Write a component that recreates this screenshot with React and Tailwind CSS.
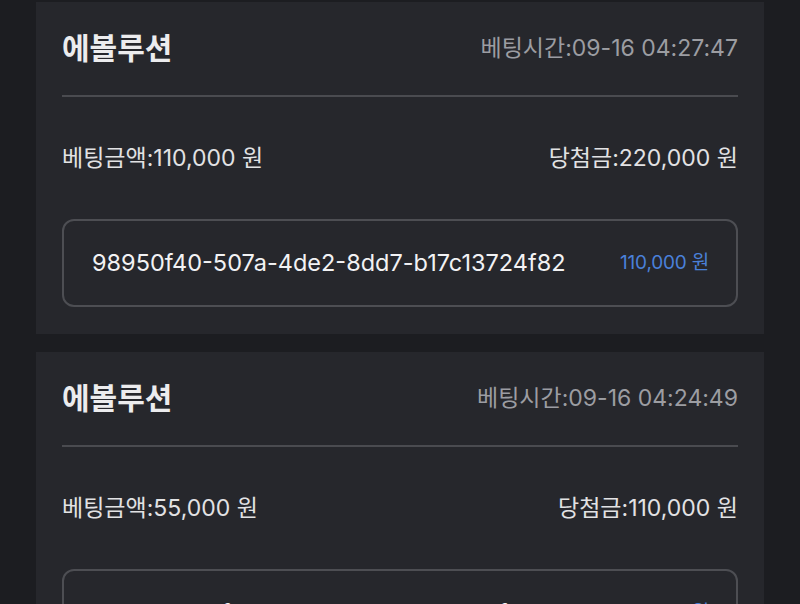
import React from "react";

const items = [
  {
    title: "에볼루션",
    time: "09-16 04:27:47",
    bet: "110,000",
    win: "220,000",
    id: "98950f40-507a-4de2-8dd7-b17c13724f82",
    amt: "110,000",
  },
  {
    title: "에볼루션",
    time: "09-16 04:24:49",
    bet: "55,000",
    win: "110,000",
    id: "3a1c7e52-6f0b-4d1e-9c2a-5e8b7d4f1a03",
    amt: "55,000",
  },
];

function Card({ it }) {
  return (
    <div className="bg-[#26272c] px-[26px] pb-[27px]">
      <div className="h-[93px] flex items-center justify-between">
        <div className="text-[30px] font-bold text-[#ececee]">{it.title}</div>
        <div className="text-[23px] text-[#9c9da2]">베팅시간:{it.time}</div>
      </div>
      <div className="h-[2px] bg-[#4a4b50]" />
      <div className="h-[122px] flex items-center justify-between text-[23px] text-[#e2e2e4]">
        <div>베팅금액:{it.bet} 원</div>
        <div>당첨금:{it.win} 원</div>
      </div>
      <div className="h-[88px] border-2 border-[#4d4e53] rounded-[12px] flex items-center justify-between pl-[28px] pr-[27px]">
        <div className="text-[23.5px] text-[#f2f2f4]">{it.id}</div>
        <div className="text-[19px] text-[#4a80d9] tracking-[-0.2px]">{it.amt} 원</div>
      </div>
    </div>
  );
}

export default function App() {
  return (
    <div
      className="w-[800px] h-[604px] overflow-hidden bg-[#1c1d21] pt-[2px] px-[36px]"
      style={{ fontFamily: 'Inter, "Noto Sans CJK KR", sans-serif' }}
    >
      <div className="flex flex-col gap-[18px]">
        {items.map((it, i) => (
          <Card key={i} it={it} />
        ))}
      </div>
    </div>
  );
}
